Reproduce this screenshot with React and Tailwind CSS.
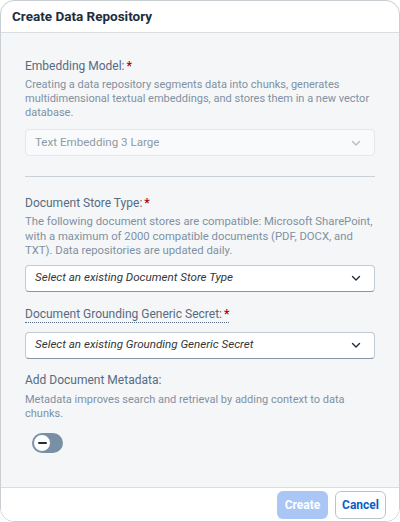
import React from 'react';

function Chevron({ className }) {
  return (
    <svg width="12" height="12" viewBox="0 0 12 12" className={className}>
      <path d="M2.5 4.5 L6 8 L9.5 4.5" fill="none" stroke="currentColor" strokeWidth="1.4" strokeLinecap="round" strokeLinejoin="round" />
    </svg>
  );
}

function Label({ children, required, dotted }) {
  return (
    <div className="text-[12px] leading-[16px] text-[#556b82]">
      <span className={dotted ? 'border-b border-dotted border-[#556b82] pb-[1px]' : ''}>
        {children}
        {required && <span className="ml-[2px] font-bold text-[#aa0808]">*</span>}
      </span>
    </div>
  );
}

function Select({ text, disabled }) {
  return (
    <div
      className={
        'flex h-[27px] items-center justify-between rounded-[4px] border pl-[9px] pr-2 ' +
        (disabled
          ? 'border-[#e5e8eb] bg-[#f9fafb] text-[#8e9aa6]'
          : 'border-[#c2cbd4] border-b-[#8596a8] bg-white text-[#32363a] italic')
      }
    >
      <span className="text-[11.6px]">{text}</span>
      <Chevron className={disabled ? 'mr-1 text-[#b5bfc9]' : 'mr-1 text-[#1d2d3e]'} />
    </div>
  );
}

export default function App() {
  return (
    <div className="h-[522px] w-[400px] bg-white font-['Roboto',sans-serif]">
      <div className="flex h-full flex-col overflow-hidden rounded-[14px] border border-[#c9ced3] bg-white">
        <div className="flex h-[32px] shrink-0 items-center border-b border-[#d9dde2] px-[11px]">
          <h1 className="text-[13.5px] font-bold text-[#1d2d3e]">Create Data Repository</h1>
        </div>

        <div className="flex-1 bg-[#f5f6f7] px-[24px] pt-[25px]">
          <Label required>Embedding Model:</Label>
          <p className="mt-[4px] text-[11px] leading-[14px] text-[#7f91a3]">
            Creating a data repository segments data into chunks, generates multidimensional textual embeddings, and stores them in a new vector database.
          </p>
          <div className="mt-[9px]">
            <Select text="Text Embedding 3 Large" disabled />
          </div>

          <div className="mt-[20px] border-t border-[#c9d0d8]" />

          <div className="mt-[18px]">
            <Label required>Document Store Type:</Label>
          </div>
          <p className="mt-[4px] text-[11.3px] leading-[14.5px] text-[#7f91a3]">
            The following document stores are compatible: Microsoft SharePoint,
            <br />
            with a maximum of 2000 compatible documents (PDF, DOCX, and
            <br />
            TXT). Data repositories are updated daily.
          </p>
          <div className="mt-[6px]">
            <Select text="Select an existing Document Store Type" />
          </div>

          <div className="mt-[14px]">
            <Label required dotted>Document Grounding Generic Secret:</Label>
          </div>
          <div className="mt-[10px]">
            <Select text="Select an existing Grounding Generic Secret" />
          </div>

          <div className="mt-[13px]">
            <Label>Add Document Metadata:</Label>
          </div>
          <p className="mt-[5px] text-[11px] leading-[14px] text-[#7f91a3]">
            Metadata improves search and retrieval by adding context to data chunks.
          </p>

          <div className="ml-[7px] mt-[12px] flex h-[20px] w-[31px] items-center rounded-full bg-[#788fa6] p-[1px]">
            <div className="flex h-[18px] w-[18px] items-center justify-center rounded-full border border-[#788fa6] bg-white">
              <div className="h-[2px] w-[9px] rounded bg-[#1d2d3e]" />
            </div>
          </div>
        </div>

        <div className="flex h-[34px] shrink-0 items-center justify-end gap-[7px] border-t border-[#d9dde2] bg-white pr-[13px]">
          <button className="h-[28px] w-[51px] rounded-[6px] bg-[#a9c6f5] text-[12px] font-bold text-white">Create</button>
          <button className="h-[28px] w-[51px] rounded-[6px] border border-[#bcc3ca] bg-white text-[12px] font-bold text-[#0a5fc6]">Cancel</button>
        </div>
      </div>
    </div>
  );
}
